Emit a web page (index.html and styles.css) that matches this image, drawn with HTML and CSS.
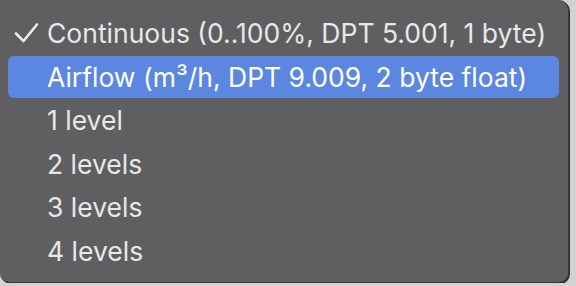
FILE: index.html
```html
<!DOCTYPE html>
<html lang="en">
<head>
    <meta charset="UTF-8">
    <title>Control type</title>
    <link rel="stylesheet" href="styles.css">
</head>
<body>

<!-- Popup menu -->
<ul class="menu">
    <li class="menu-item">
        <span class="check"><svg width="26" height="22" viewBox="0 0 26 22"><path d="M2 11.5 L9.5 19 L23 2.5" fill="none" stroke="#ececec" stroke-width="2.6" stroke-linecap="round" stroke-linejoin="round"/></svg></span>
        <span>Continuous (0..100%, DPT 5.001, 1 byte)</span>
    </li>
    <li class="menu-item selected"><span class="check"></span><span>Airflow (m³/h, DPT 9.009, 2 byte float)</span></li>
    <li class="menu-item"><span class="check"></span><span>1 level</span></li>
    <li class="menu-item"><span class="check"></span><span>2 levels</span></li>
    <li class="menu-item"><span class="check"></span><span>3 levels</span></li>
    <li class="menu-item"><span class="check"></span><span>4 levels</span></li>
</ul>

</body>
</html>
```

FILE: styles.css
```css
body {
    margin: 0;
    background-color: #d2d2d2;
    font-family: Inter, "Noto Sans", sans-serif;
}
.menu {
    list-style: none;
    margin: 0;
    padding: 12px 0 0 0;
    width: 568px;
    height: 270px;
    background-color: #5f5f61;
    border: 1px solid #3a3a3a;
    border-top: none;
    border-left: none;
    border-radius: 0 10px 10px 10px;
    box-shadow: 1px 1px 0 #2c2c2c;
}
.menu-item {
    display: flex;
    align-items: center;
    height: 42px;
    margin: 0 9px 1.6px 8px;
    padding-left: 6px;
    border-radius: 6px;
    color: #e8e8e8;
    font-size: 26.5px;
}
.menu-item.selected {
    background-color: #5b87e1;
    color: #ffffff;
}
.check {
    display: flex;
    align-items: center;
    width: 33px;
    height: 22px;
}
```
